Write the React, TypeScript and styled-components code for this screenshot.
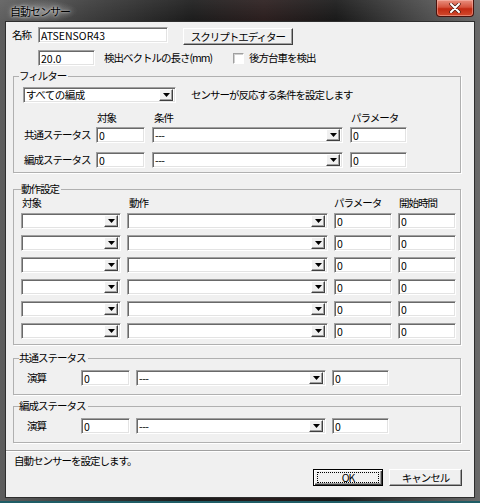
import React from 'react'
import styled, { createGlobalStyle } from 'styled-components'

const GlobalStyle = createGlobalStyle`
  html, body {
    margin: 0;
    padding: 0;
    background: #111;
  }
  body {
    font-family: "Noto Sans CJK JP", "Noto Sans", sans-serif;
    color: #000;
  }
  * {
    box-sizing: border-box;
  }
`

const Window = styled.div`
  width: 480px;
  height: 503px;
  display: flex;
  flex-direction: column;
  padding: 0 6px 6px;
  background:
    linear-gradient(to bottom, rgba(255, 255, 255, 0.08), rgba(0, 0, 0, 0) 22px),
    linear-gradient(to right, #5e5e5e 0%, #3c3c3c 18%, #1b1b1b 40%, #2a1d1d 55%, #181818 70%, #4a4a4a 88%, #6a6a6a 100%);
  box-shadow: inset 0 -2px 0 #1f5d66;
`

const TitleBar = styled.div`
  height: 22px;
  display: flex;
  align-items: flex-start;
  justify-content: space-between;
  padding-left: 2px;
`

const Title = styled.div`
  font-size: 11px;
  line-height: 22px;
  letter-spacing: -1px;
  color: #000;
  text-shadow: 0 0 5px rgba(255, 255, 255, 0.8), 0 0 2px rgba(255, 255, 255, 0.7);
  padding: 0 8px 0 2px;
  background: radial-gradient(ellipse at center, rgba(200, 200, 200, 0.4), rgba(200, 200, 200, 0) 70%);
`

const CloseButton = styled.div`
  width: 38px;
  height: 17px;
  display: flex;
  align-items: center;
  justify-content: center;
  border: 1px solid #4a120c;
  border-top: none;
  border-radius: 0 0 4px 4px;
  background: linear-gradient(to bottom, #e9907f 0%, #d5533d 45%, #c22a12 55%, #d24a2d 100%);
  box-shadow: inset 0 0 0 1px rgba(255, 200, 190, 0.45);
`

const Client = styled.div`
  flex: 1;
  background: #f0f0f0;
  display: flex;
  flex-direction: column;
  box-shadow: 0 0 0 1px #2e2e2e;
  font-size: 10.5px;
  letter-spacing: -1px;
`

const Row = styled.div<{ $mt: number; $pl?: number }>`
  display: flex;
  align-items: center;
  margin-top: ${(p) => p.$mt}px;
  padding-left: ${(p) => p.$pl ?? 0}px;
`

const Label = styled.span<{ $w?: number; $ml?: number }>`
  display: inline-block;
  white-space: nowrap;
  line-height: 14px;
  width: ${(p) => (p.$w ? `${p.$w}px` : 'auto')};
  margin-left: ${(p) => p.$ml ?? 0}px;
`

const Field = styled.input<{ $w: number }>`
  width: ${(p) => p.$w}px;
  height: 16px;
  margin: 0;
  padding: 0 0 0 2px;
  border: 1px solid;
  border-color: #a0a0a0 #ffffff #ffffff #a0a0a0;
  box-shadow: inset 1px 1px 0 #696969, inset -1px -1px 0 #e3e3e3;
  background: #fff;
  font-family: "Noto Sans CJK JP", "Noto Sans", sans-serif;
  font-size: 10.5px;
  line-height: 14px;
  color: #000;
  outline: none;
`

const ComboFrame = styled.div<{ $w: number }>`
  width: ${(p) => p.$w}px;
  height: 16px;
  display: flex;
  align-items: center;
  padding: 0 2px;
  border: 1px solid;
  border-color: #a0a0a0 #ffffff #ffffff #a0a0a0;
  box-shadow: inset 1px 1px 0 #696969, inset -1px -1px 0 #e3e3e3;
  background: #fff;
`

const ComboText = styled.span`
  flex: 1;
  font-size: 10.5px;
  line-height: 14px;
  letter-spacing: -0.5px;
  white-space: nowrap;
`

const DropButton = styled.span`
  width: 14px;
  height: 12px;
  display: flex;
  align-items: center;
  justify-content: center;
  background: #f0f0f0;
  border: 1px solid;
  border-color: #ffffff #404040 #404040 #ffffff;
  box-shadow: inset -1px -1px 0 #a0a0a0;
`

const PushButton = styled.div<{ $w: number; $default?: boolean }>`
  width: ${(p) => p.$w}px;
  height: 17px;
  display: flex;
  align-items: center;
  justify-content: center;
  background: #f0f0f0;
  border: 1px solid;
  border-color: ${(p) => (p.$default ? '#000' : '#ffffff #404040 #404040 #ffffff')};
  box-shadow: ${(p) =>
    p.$default
      ? 'inset 1px 1px 0 #fff, inset -1px -1px 0 #404040, inset -2px -2px 0 #a0a0a0'
      : 'inset -1px -1px 0 #a0a0a0'};
  font-size: 10.5px;
  line-height: 13px;
  position: relative;
`

const FocusRing = styled.span`
  position: absolute;
  inset: 2px 3px 2px 3px;
  border: 1px dotted #000;
`

const CheckBox = styled.span`
  width: 11px;
  height: 11px;
  display: inline-block;
  background: #fff;
  border: 1px solid;
  border-color: #a0a0a0 #ffffff #ffffff #a0a0a0;
  box-shadow: inset 1px 1px 0 #d0d0d0;
`

const Group = styled.fieldset<{ $mt: number; $pb: number }>`
  margin: ${(p) => p.$mt}px 0 0 7px;
  width: 448px;
  min-width: 0;
  padding: 0 0 ${(p) => p.$pb}px 0;
  border: 1px solid #b0b0b0;
  box-shadow: 1px 1px 0 #fff;
`

const Legend = styled.legend<{ $ml: number }>`
  margin-left: ${(p) => p.$ml}px;
  padding: 0 2px 0 0;
  font-size: 10.5px;
  line-height: 12px;
  height: 12px;
`

const Grid = styled.div<{ $cols: string; $pl: number; $mt: number; $gap?: number; $rowgap?: number }>`
  display: grid;
  grid-template-columns: ${(p) => p.$cols};
  column-gap: ${(p) => p.$gap ?? 6}px;
  row-gap: ${(p) => p.$rowgap ?? 6}px;
  align-items: center;
  padding-left: ${(p) => p.$pl}px;
  margin-top: ${(p) => p.$mt}px;
`

const Header = styled.span<{ $ml?: number }>`
  line-height: 14px;
  height: 14px;
  white-space: nowrap;
  margin-left: ${(p) => p.$ml ?? 1}px;
`

const Separator = styled.div`
  margin-top: 7px;
  width: 464px;
  height: 2px;
  border-top: 1px solid #a0a0a0;
  border-bottom: 1px solid #fff;
`

const ButtonBar = styled.div`
  display: flex;
  justify-content: flex-end;
  gap: 6px;
  margin-top: 1px;
  padding-right: 12px;
`

const Arrow = () => (
  <svg width="7" height="4" viewBox="0 0 7 4">
    <polygon points="0,0 7,0 3.5,4" fill="#000" />
  </svg>
)

const Combo = ({ w, text = '' }: { w: number; text?: string }) => (
  <ComboFrame $w={w}>
    <ComboText>{text}</ComboText>
    <DropButton>
      <Arrow />
    </DropButton>
  </ComboFrame>
)

const CloseX = () => (
  <svg width="12" height="10" viewBox="0 0 12 10">
    <path d="M2 1 L10 9 M10 1 L2 9" stroke="#4a1a12" strokeWidth="3.4" strokeLinecap="round" />
    <path d="M2 1 L10 9 M10 1 L2 9" stroke="#fff" strokeWidth="2" strokeLinecap="round" />
  </svg>
)

const actionRows = [0, 1, 2, 3, 4, 5]

export default function App() {
  return (
    <>
      <GlobalStyle />
      <Window>
        <TitleBar>
          <Title>自動センサー</Title>
          <CloseButton>
            <CloseX />
          </CloseButton>
        </TitleBar>
        <Client>
          <Row $mt={5} $pl={6} style={{ alignItems: 'flex-start' }}>
            <Label $w={26} style={{ marginTop: 1 }}>名称</Label>
            <Field $w={130} readOnly defaultValue="ATSENSOR43" />
            <PushButton $w={110} style={{ marginLeft: 15, marginTop: 1 }}>スクリプトエディター</PushButton>
          </Row>
          <Row $mt={5} $pl={32}>
            <Field $w={57} readOnly defaultValue="20.0" />
            <Label $w={129} $ml={9}>検出ベクトルの長さ(mm)</Label>
            <CheckBox />
            <Label $ml={5}>後方台車を検出</Label>
          </Row>

          <Group $mt={4} $pb={4}>
            <Legend $ml={5}>フィルター</Legend>
            <Row $mt={5} $pl={9}>
              <Combo w={153} text="すべての編成" />
              <Label $ml={15}>センサーが反応する条件を設定します</Label>
            </Row>
            <Grid $cols="65px 49px 191px 57px" $gap={7} $pl={10} $mt={8} $rowgap={2}>
              <span />
              <Header>対象</Header>
              <Header $ml={2}>条件</Header>
              <Header>パラメータ</Header>
              <Label>共通ステータス</Label>
              <Field $w={49} readOnly defaultValue="0" />
              <Combo w={191} text="---" />
              <Field $w={57} readOnly defaultValue="0" />
            </Grid>
            <Grid $cols="65px 49px 191px 57px" $gap={7} $pl={10} $mt={9}>
              <Label>編成ステータス</Label>
              <Field $w={49} readOnly defaultValue="0" />
              <Combo w={191} text="---" />
              <Field $w={57} readOnly defaultValue="0" />
            </Grid>
          </Group>

          <Group $mt={10} $pb={5}>
            <Legend $ml={7}>動作設定</Legend>
            <Grid $cols="100px 201px 58px 58px" $pl={7} $mt={1} $rowgap={6}>
              <Header>対象</Header>
              <Header $ml={2}>動作</Header>
              <Header $ml={0}>パラメータ</Header>
              <Header>開始時間</Header>
            </Grid>
            <Grid $cols="100px 201px 58px 58px" $pl={7} $mt={3} $rowgap={6}>
              {actionRows.map((i) => (
                <React.Fragment key={i}>
                  <Combo w={100} />
                  <Combo w={201} />
                  <Field $w={58} readOnly defaultValue="0" />
                  <Field $w={58} readOnly defaultValue="0" />
                </React.Fragment>
              ))}
            </Grid>
          </Group>

          <Group $mt={7} $pb={8}>
            <Legend $ml={5}>共通ステータス</Legend>
            <Grid $cols="48px 49px 190px 57px" $pl={13} $mt={6}>
              <Label>演算</Label>
              <Field $w={49} readOnly defaultValue="0" />
              <Combo w={190} text="---" />
              <Field $w={57} readOnly defaultValue="0" />
            </Grid>
          </Group>

          <Group $mt={5} $pb={8}>
            <Legend $ml={5}>編成ステータス</Legend>
            <Grid $cols="48px 49px 190px 57px" $pl={13} $mt={6}>
              <Label>演算</Label>
              <Field $w={49} readOnly defaultValue="0" />
              <Combo w={190} text="---" />
              <Field $w={57} readOnly defaultValue="0" />
            </Grid>
          </Group>

          <Separator />
          <Row $mt={2} $pl={8}>
            <Label>自動センサーを設定します。</Label>
          </Row>
          <ButtonBar>
            <PushButton $w={70} $default>
              OK
              <FocusRing />
            </PushButton>
            <PushButton $w={73}>キャンセル</PushButton>
          </ButtonBar>
        </Client>
      </Window>
    </>
  )
}
